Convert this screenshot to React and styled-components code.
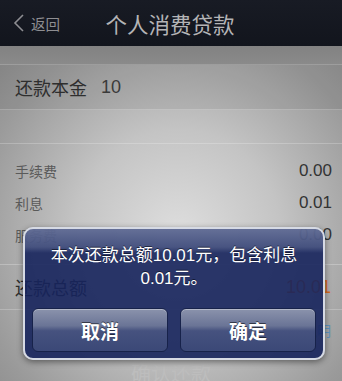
import React from "react";
import styled, { createGlobalStyle } from "styled-components";

const Global = createGlobalStyle`
  html, body { margin: 0; padding: 0; }
  body { width: 342px; height: 381px; overflow: hidden; font-family: "Liberation Sans", "Noto Sans CJK SC", sans-serif; }
`;

const Screen = styled.div`
  position: relative;
  width: 342px;
  height: 381px;
  overflow: hidden;
  display: flex;
  flex-direction: column;
  background: radial-gradient(ellipse 75% 70% at 52% 62%, #dedede 0%, #c4c4c4 40%, #9a9a9a 80%, #8a8a8a 100%);
`;

const NavBar = styled.div`
  height: 46px;
  flex: none;
  background: linear-gradient(#181b24, #12151d);
  display: flex;
  align-items: center;
  position: relative;
`;

const Back = styled.div`
  display: flex;
  align-items: center;
  gap: 6px;
  padding-left: 13px;
  color: #8e8e92;
  font-size: 14.5px;
  font-family: "Noto Sans CJK SC", sans-serif;
`;

const Title = styled.div`
  flex: 1;
  text-align: center;
  margin-right: 62px;
  color: #b4b4b6;
  font-size: 21.5px;
  font-family: "Noto Sans CJK SC", sans-serif;
`;

const Band = styled.div`
  height: 18px;
  flex: none;
  background: linear-gradient(#828282, #8a8a8a);
  border-bottom: 1px solid rgba(255, 255, 255, 0.22);
`;

const MainRow = styled.div`
  height: 44px;
  flex: none;
  display: flex;
  align-items: center;
  padding: 0 11px 0 15px;
  border-bottom: 1px solid rgba(255, 255, 255, 0.22);
  background: ${(p) => (p.$top ? "rgba(0,0,0,0.06)" : "transparent")};
`;

const MainLabel = styled.span`
  font-family: "Noto Sans CJK SC", sans-serif;
  font-size: 18px;
  color: #2e2e2e;
`;

const MainValue = styled.span`
  margin-left: ${(p) => (p.$right ? "auto" : "14px")};
  font-size: 18px;
  color: ${(p) => p.$color || "#3a3a3a"};
`;

const Gap = styled.div`
  height: 33px;
  flex: none;
  border-bottom: 1px solid rgba(255, 255, 255, 0.22);
`;

const Detail = styled.div`
  display: flex;
  flex-direction: column;
  padding: 11px 0 13px;
  border-bottom: 1px solid rgba(255, 255, 255, 0.25);
`;

const DetailRow = styled.div`
  height: 32px;
  display: flex;
  align-items: center;
  justify-content: space-between;
  padding: 0 10px 0 15px;
`;

const DetailLabel = styled.span`
  font-family: "Noto Sans CJK SC", sans-serif;
  font-size: 14px;
  color: #5a5a5a;
`;

const DetailValue = styled.span`
  font-size: 17px;
  color: #333;
`;

const Note = styled.div`
  text-align: right;
  padding: 10px 11px 0 0;
  font-family: "Noto Sans CJK SC", sans-serif;
  font-size: 14px;
  color: #5f93bf;
`;

const Confirm = styled.div`
  margin-top: 18px;
  text-align: center;
  font-family: "Noto Sans CJK SC", sans-serif;
  font-size: 20px;
  color: #bdbdbd;
`;

const Alert = styled.div`
  position: absolute;
  left: 23px;
  top: 227px;
  width: 298px;
  height: 129px;
  border: 2px solid #d6dae4;
  border-radius: 10px;
  background:
    linear-gradient(rgba(150, 160, 190, 0.55) 0px, rgba(110, 122, 160, 0.45) 18px, rgba(0,0,0,0) 24px),
    rgba(22, 36, 92, 0.9);
  box-shadow: 0 2px 6px rgba(0, 0, 0, 0.45);
  display: flex;
  flex-direction: column;
  align-items: center;
`;

const Message = styled.div`
  margin-top: 15px;
  width: 270px;
  text-align: center;
  color: #fff;
  font-size: 17px;
  line-height: 23px;
  text-shadow: 0 -1px 0 rgba(0, 0, 0, 0.5);
`;

const Buttons = styled.div`
  margin-top: auto;
  margin-bottom: 6px;
  display: flex;
  gap: 12px;
`;

const Button = styled.div`
  width: 134px;
  height: 42px;
  border: 1px solid #17224a;
  border-radius: 6px;
  background: linear-gradient(#8b93ac 0%, #6a7496 40%, #46527f 52%, #3b4877 100%);
  box-shadow: inset 0 1px 0 rgba(255, 255, 255, 0.35);
  display: flex;
  align-items: center;
  justify-content: center;
  color: #fff;
  font-family: "Noto Sans CJK SC", sans-serif;
  font-weight: 700;
  font-size: 19px;
  text-shadow: 0 -1px 0 rgba(0, 0, 0, 0.55);
`;

export default function App() {
  return (
    <>
      <Global />
      <Screen>
        <NavBar>
          <Back>
            <svg width="12" height="18" viewBox="0 0 12 18">
              <polyline points="10,1 2,9 10,17" fill="none" stroke="#8e8e92" strokeWidth="1.6" />
            </svg>
            <span>返回</span>
          </Back>
          <Title>个人消费贷款</Title>
        </NavBar>
        <Band />
        <MainRow $top>
          <MainLabel>还款本金</MainLabel>
          <MainValue>10</MainValue>
        </MainRow>
        <Gap />
        <Detail>
          <DetailRow>
            <DetailLabel>手续费</DetailLabel>
            <DetailValue>0.00</DetailValue>
          </DetailRow>
          <DetailRow>
            <DetailLabel>利息</DetailLabel>
            <DetailValue>0.01</DetailValue>
          </DetailRow>
          <DetailRow>
            <DetailLabel>服务费</DetailLabel>
            <DetailValue>0.00</DetailValue>
          </DetailRow>
        </Detail>
        <MainRow>
          <MainLabel>还款总额</MainLabel>
          <MainValue $right $color="#d2691e">10.01</MainValue>
        </MainRow>
        <Note>费用说明</Note>
        <Confirm>确认还款</Confirm>
        <Alert>
          <Message>本次还款总额10.01元，包含利息0.01元。</Message>
          <Buttons>
            <Button>取消</Button>
            <Button>确定</Button>
          </Buttons>
        </Alert>
      </Screen>
    </>
  );
}
